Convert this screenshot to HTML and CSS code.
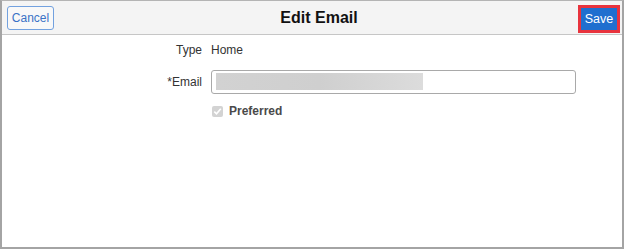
FILE: index.html
```html
<!DOCTYPE html>
<html lang="en">
<head>
<meta charset="utf-8">
<title>Edit Email</title>
<link rel="stylesheet" href="styles.css">
</head>
<body>
<div class="panel">
  <header class="bar">
    <button class="btn-cancel" type="button">Cancel</button>
    <h1 class="title">Edit Email</h1>
    <div class="save-wrap"><button class="btn-save" type="button">Save</button></div>
  </header>
  <main class="form">
    <div class="label row1">Type</div>
    <div class="value row1">Home</div>
    <div class="label row2">*Email</div>
    <div class="value row2"><div class="input"><span class="blur"></span></div></div>
    <div class="label row3"></div>
    <div class="value row3 pref">
      <span class="check"><svg width="11" height="11" viewBox="0 0 11 11"><path d="M2.3 5.6 L4.5 7.8 L8.8 2.8" fill="none" stroke="#ffffff" stroke-width="1.6"/></svg></span>
      <span class="pref-text">Preferred</span>
    </div>
  </main>
</div>
</body>
</html>
```
FILE: styles.css
```css
html, body {
  margin: 0;
  padding: 0;
  background: #ffffff;
}
body {
  font-family: "Liberation Sans", Arial, sans-serif;
  color: #333333;
}
.panel {
  box-sizing: border-box;
  width: 624px;
  height: 249px;
  border: 2px solid #a4a4a4;
  border-top: 1px solid #b4b4b4;
  background: #ffffff;
}
.bar {
  display: grid;
  grid-template-columns: auto 1fr auto;
  align-items: center;
  height: 33px;
  background: #f4f4f4;
  border-bottom: 1px solid #c6c6c6;
}
.btn-cancel {
  box-sizing: border-box;
  margin-left: 5px;
  margin-top: 1px;
  height: 24px;
  width: 47px;
  padding: 0;
  font-family: inherit;
  font-size: 12px;
  color: #3a72c6;
  background: #f8f8f8;
  border: 1px solid #72a1df;
  border-radius: 3px;
}
.title {
  margin: 0;
  padding-left: 6px;
  text-align: center;
  font-size: 16px;
  font-weight: bold;
  color: #111111;
}
.save-wrap {
  box-sizing: border-box;
  margin-right: 2px;
  margin-top: 2px;
  border: 3px solid #e8333d;
  width: 42px;
  height: 28px;
}
.btn-save {
  display: block;
  box-sizing: border-box;
  width: 36px;
  height: 22px;
  padding: 0;
  border: 0;
  background: #1f6fcf;
  color: #ffffff;
  font-family: inherit;
  font-size: 12.5px;
}
.form {
  display: grid;
  grid-template-columns: 200px 1fr;
  column-gap: 9px;
  padding-top: 6px;
}
.label {
  text-align: right;
  font-size: 12px;
  color: #333333;
  display: flex;
  align-items: center;
  justify-content: flex-end;
}
.value {
  font-size: 12px;
  color: #333333;
  display: flex;
  align-items: center;
}
.row1 { height: 18px; }
.row2 { height: 24px; margin-top: 11px; }
.row3 { height: 18px; margin-top: 8px; }
.input {
  box-sizing: border-box;
  width: 365px;
  height: 24px;
  border: 1px solid #a9a9a9;
  border-radius: 3px;
  padding: 2px 4px;
  display: flex;
}
.blur {
  display: block;
  width: 207px;
  height: 17px;
  background: linear-gradient(90deg, #d2d2d2 0%, #cfcfcf 50%, #dcdcdc 100%);
}
.pref {
  gap: 6px;
}
.check {
  display: inline-flex;
  width: 11px;
  height: 11px;
  background: #d3d3d3;
  border-radius: 2px;
  margin-left: 1px;
}
.pref-text {
  font-weight: bold;
  color: #4a4a4a;
}
```
